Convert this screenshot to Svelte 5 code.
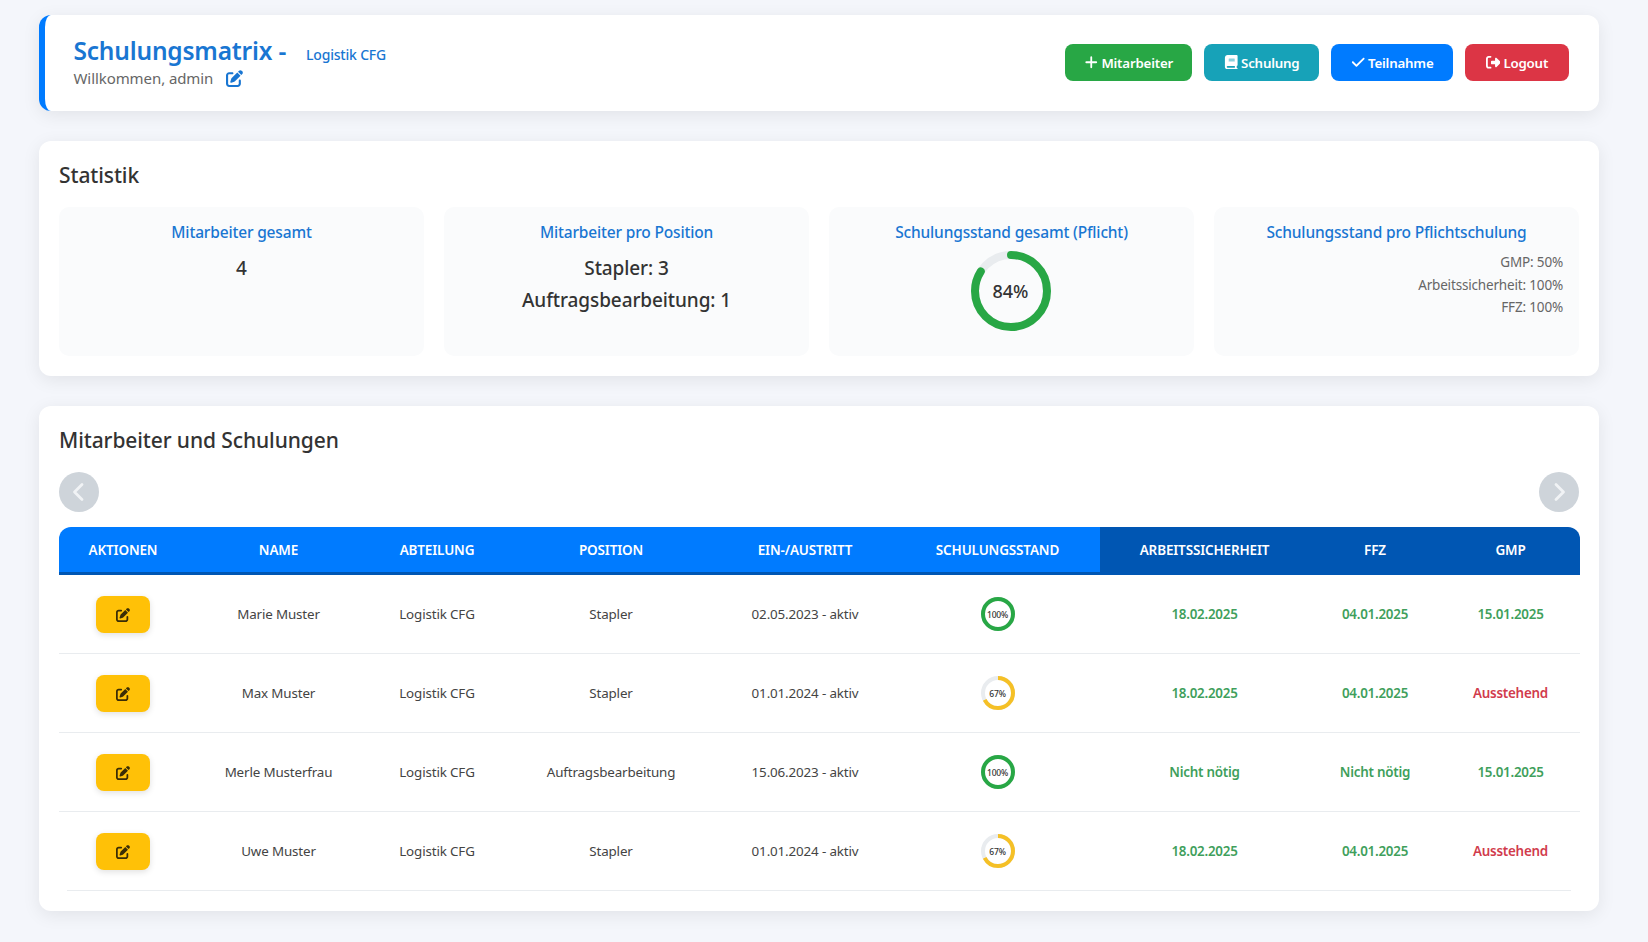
<script>
  const rows = [
    { name: 'Marie Muster', pos: 'Stapler', date: '02.05.2023 - aktiv', pct: 100, a: '18.02.2025', f: '04.01.2025', g: '15.01.2025' },
    { name: 'Max Muster', pos: 'Stapler', date: '01.01.2024 - aktiv', pct: 67, a: '18.02.2025', f: '04.01.2025', g: 'Ausstehend' },
    { name: 'Merle Musterfrau', pos: 'Auftragsbearbeitung', date: '15.06.2023 - aktiv', pct: 100, a: 'Nicht nötig', f: 'Nicht nötig', g: '15.01.2025' },
    { name: 'Uwe Muster', pos: 'Stapler', date: '01.01.2024 - aktiv', pct: 67, a: '18.02.2025', f: '04.01.2025', g: 'Ausstehend' }
  ];
  const widths = [128, 183, 134, 214, 174, 208, 209, 132, 139];
  const edit = 'M471.6 21.7c-21.9-21.9-57.3-21.9-79.2 0L362.3 51.7l97.9 97.9 30.1-30.1c21.9-21.9 21.9-57.3 0-79.2L471.6 21.7zm-299.2 220c-6.1 6.1-10.8 13.6-13.5 21.9l-29.6 88.8c-2.9 8.6-.6 18.1 5.8 24.6s15.9 8.7 24.6 5.8l88.8-29.6c8.2-2.7 15.7-7.4 21.9-13.5L437.7 172.3 339.7 74.3 172.4 241.7zM96 64C43 64 0 107 0 160V416c0 53 43 96 96 96H352c53 0 96-43 96-96V320c0-17.7-14.3-32-32-32s-32 14.3-32 32v96c0 17.7-14.3 32-32 32H96c-17.7 0-32-14.3-32-32V160c0-17.7 14.3-32 32-32h96c17.7 0 32-14.3 32-32s-14.3-32-32-32H96z';
  const circ = 2 * Math.PI * 15;
</script>

<div class="page">
  <header class="card head">
    <div>
      <div class="title-line"><h1>Schulungsmatrix -</h1><span class="dept">Logistik CFG</span></div>
      <div class="welcome">Willkommen, admin <svg class="welcome-icon" viewBox="0 0 512 512"><path d={edit} /></svg></div>
    </div>
    <div class="actions">
      <button class="btn green"><svg viewBox="0 0 448 512"><path d="M256 80c0-17.7-14.3-32-32-32s-32 14.3-32 32V224H48c-17.7 0-32 14.3-32 32s14.3 32 32 32H192V432c0 17.7 14.3 32 32 32s32-14.3 32-32V288H400c17.7 0 32-14.3 32-32s-14.3-32-32-32H256V80z" /></svg><span>Mitarbeiter</span></button>
      <button class="btn teal"><svg viewBox="0 0 448 512"><path d="M96 0C43 0 0 43 0 96V416c0 53 43 96 96 96H384h32c17.7 0 32-14.3 32-32s-14.3-32-32-32V384c17.7 0 32-14.3 32-32V32c0-17.7-14.3-32-32-32H384 96zm0 384H352v64H96c-17.7 0-32-14.3-32-32s14.3-32 32-32zm32-240c0-8.8 7.2-16 16-16H336c8.8 0 16 7.2 16 16s-7.2 16-16 16H144c-8.8 0-16-7.2-16-16zm16 48H336c8.8 0 16 7.2 16 16s-7.2 16-16 16H144c-8.8 0-16-7.2-16-16s7.2-16 16-16z" /></svg><span>Schulung</span></button>
      <button class="btn blue"><svg viewBox="0 0 448 512"><path d="M438.6 105.4c12.5 12.5 12.5 32.8 0 45.3l-256 256c-12.5 12.5-32.8 12.5-45.3 0l-128-128c-12.5-12.5-12.5-32.8 0-45.3s32.8-12.5 45.3 0L160 338.7 393.4 105.4c12.5-12.5 32.8-12.5 45.3 0z" /></svg><span>Teilnahme</span></button>
      <button class="btn red"><svg viewBox="0 0 512 512"><path d="M502.6 278.6c12.5-12.5 12.5-32.8 0-45.3l-128-128c-9.2-9.2-22.9-11.9-34.9-6.9s-19.8 16.6-19.8 29.6l0 72-112 0c-17.7 0-32 14.3-32 32l0 64c0 17.7 14.3 32 32 32l112 0 0 72c0 12.9 7.8 24.6 19.8 29.6s25.7 2.2 34.9-6.9l128-128zM160 96c17.7 0 32-14.3 32-32s-14.3-32-32-32L96 32C43 32 0 75 0 128L0 384c0 53 43 96 96 96l64 0c17.7 0 32-14.3 32-32s-14.3-32-32-32l-64 0c-17.7 0-32-14.3-32-32l0-256c0-17.7 14.3-32 32-32l64 0z" /></svg><span>Logout</span></button>
    </div>
  </header>

  <section class="card panel">
    <h2>Statistik</h2>
    <div class="stats">
      <div class="stat">
        <h3>Mitarbeiter gesamt</h3>
        <div class="val">4</div>
      </div>
      <div class="stat">
        <h3>Mitarbeiter pro Position</h3>
        <div class="val">Stapler: 3</div>
        <div class="val">Auftragsbearbeitung: 1</div>
      </div>
      <div class="stat">
        <h3>Schulungsstand gesamt (Pflicht)</h3>
        <div class="big-ring">
          <svg viewBox="0 0 80 80">
            <circle cx="40" cy="40" r="36" class="track" stroke-width="8" />
            <circle cx="40" cy="40" r="36" class="arc-green" stroke-width="8" stroke-linecap="round"
              stroke-dasharray="{2 * Math.PI * 36 * 0.84} {2 * Math.PI * 36}" transform="rotate(-90 40 40)" />
          </svg>
          <span>84%</span>
        </div>
      </div>
      <div class="stat">
        <h3>Schulungsstand pro Pflichtschulung</h3>
        <div class="list">
          <div>GMP: 50%</div>
          <div>Arbeitssicherheit: 100%</div>
          <div>FFZ: 100%</div>
        </div>
      </div>
    </div>
  </section>

  <section class="card panel last">
    <h2>Mitarbeiter und Schulungen</h2>
    <div class="nav">
      <button class="round" aria-label="Zurück"><svg viewBox="0 0 20 20"><path d="M13 2.5 L5.5 10 L13 17.5" /></svg></button>
      <button class="round" aria-label="Weiter"><svg viewBox="0 0 20 20"><path d="M7 2.5 L14.5 10 L7 17.5" /></svg></button>
    </div>
    <table>
      <colgroup>
        {#each widths as w}<col style="width:{w}px" />{/each}
      </colgroup>
      <thead>
        <tr>
          <th>Aktionen</th><th>Name</th><th>Abteilung</th><th>Position</th><th>Ein-/Austritt</th><th class="shift">Schulungsstand</th>
          <th class="dark">Arbeitssicherheit</th><th class="dark">FFZ</th><th class="dark">GMP</th>
        </tr>
      </thead>
      <tbody>
        {#each rows as r}
          <tr>
            <td><button class="edit" aria-label="Bearbeiten"><svg viewBox="0 0 512 512"><path d={edit} /></svg></button></td>
            <td>{r.name}</td>
            <td>Logistik CFG</td>
            <td>{r.pos}</td>
            <td>{r.date}</td>
            <td class="shift">
              <div class="mini">
                <svg viewBox="0 0 34 34">
                  <circle cx="17" cy="17" r="15" class="track" stroke-width="4" />
                  <circle cx="17" cy="17" r="15" class={r.pct === 100 ? 'arc-green' : 'arc-yellow'} stroke-width="4"
                    stroke-dasharray="{circ * r.pct / 100} {circ}" transform="rotate(-90 17 17)" />
                </svg>
                <span>{r.pct}%</span>
              </div>
            </td>
            <td class="st" class:bad={r.a === 'Ausstehend'}>{r.a}</td>
            <td class="st" class:bad={r.f === 'Ausstehend'}>{r.f}</td>
            <td class="st" class:bad={r.g === 'Ausstehend'}>{r.g}</td>
          </tr>
        {/each}
      </tbody>
    </table>
    <div class="endline"></div>
  </section>
</div>

<style>
  :global(body) {
    margin: 0;
    background: #f4f6fb;
    font-family: "Noto Sans", "Open Sans", sans-serif;
    color: #333;
  }
  .page {
    padding: 15px 49px 31px 39px;
    display: flex;
    flex-direction: column;
    gap: 30px;
  }
  .card {
    background: #fff;
    border-radius: 12px;
    box-shadow: 0 4px 18px rgba(0, 0, 0, 0.08);
  }
  .head {
    height: 96px;
    box-sizing: border-box;
    border-left: 6px solid #007bff;
    padding: 0 30px 2px 28.5px;
    display: flex;
    align-items: center;
    justify-content: space-between;
  }
  .title-line {
    display: flex;
    align-items: center;
    gap: 20px;
    margin-bottom: 2px;
  }
  h1 {
    margin: 0;
    font-size: 24.5px;
    line-height: 30px;
    font-weight: 600;
    color: #1976d2;
    letter-spacing: -0.2px;
  }
  .dept {
    font-size: 14px;
    font-weight: 500;
    color: #1976d2;
    letter-spacing: -0.2px;
    margin-top: 7px;
  }
  .welcome {
    display: flex;
    align-items: center;
    font-size: 15px;
    line-height: 20px;
    color: #666;
    letter-spacing: -0.08px;
  }
  .welcome-icon {
    width: 17px;
    height: 17px;
    margin-left: 13px;
    fill: #1976d2;
  }
  .actions {
    display: flex;
    gap: 12px;
  }
  .btn {
    height: 37px;
    border: 0;
    border-radius: 8px;
    padding: 0;
    display: flex;
    align-items: center;
    justify-content: center;
    gap: 3px;
    color: #fff;
    font: 600 13.3px "Noto Sans", sans-serif;
    letter-spacing: -0.2px;
  }
  .btn span {
    padding-top: 2px;
  }
  .btn svg {
    height: 14.5px;
    width: 14.5px;
    fill: #fff;
  }
  .green { width: 127px; background: #28a745; }
  .teal { width: 115px; background: #17a2b8; }
  .blue { width: 122px; background: #007bff; }
  .red { width: 104px; background: #dc3545; }
  .panel {
    padding: 20px;
  }
  h2 {
    margin: 0;
    font-size: 21px;
    line-height: 28px;
    font-weight: 500;
    color: #333;
    letter-spacing: -0.1px;
  }
  .stats {
    margin-top: 18px;
    display: grid;
    grid-template-columns: repeat(4, 1fr);
    gap: 20px;
  }
  .stat {
    height: 149px;
    box-sizing: border-box;
    padding: 15px 16px;
    background: #fafbfc;
    border-radius: 10px;
    text-align: center;
  }
  h3 {
    margin: 0 0 10px;
    font-size: 15.5px;
    line-height: 20px;
    font-weight: 500;
    color: #1976d2;
    letter-spacing: -0.17px;
  }
  .val {
    font-size: 19px;
    line-height: 32px;
    font-weight: 500;
    color: #333;
    letter-spacing: -0.1px;
  }
  .big-ring {
    position: relative;
    width: 80px;
    height: 80px;
    margin: -1px auto 0;
    left: -1px;
    display: flex;
    align-items: center;
    justify-content: center;
    font-size: 18px;
    font-weight: 500;
  }
  .big-ring svg, .mini svg {
    position: absolute;
    inset: 0;
    width: 100%;
    height: 100%;
  }
  .big-ring span, .mini span {
    position: relative;
  }
  circle {
    fill: none;
  }
  .track { stroke: #e9ecef; }
  .arc-green { stroke: #28a745; }
  .arc-yellow { stroke: #f5c026; }
  .list {
    text-align: right;
    font-size: 13.5px;
    line-height: 22.5px;
    color: #666;
    margin-top: -1px;
    letter-spacing: -0.17px;
  }
  .last {
    padding-bottom: 20px;
  }
  .nav {
    margin-top: 18px;
    display: flex;
    justify-content: space-between;
  }
  .round {
    width: 40px;
    height: 40px;
    padding: 0;
    border: 0;
    border-radius: 50%;
    background: #ced4da;
    display: flex;
    align-items: center;
    justify-content: center;
  }
  .round svg {
    width: 20px;
    height: 20px;
    fill: none;
    stroke: #f1f3f5;
    stroke-width: 2.8;
    stroke-linecap: round;
    stroke-linejoin: round;
  }
  table {
    margin-top: 15px;
    width: 100%;
    table-layout: fixed;
    border-collapse: separate;
    border-spacing: 0;
  }
  th {
    height: 45px;
    padding: 0;
    background: #007bff;
    border-bottom: 3px solid #0056b3;
    color: #fff;
    font-size: 13.5px;
    font-weight: 600;
    text-transform: uppercase;
    text-align: center;
    letter-spacing: -0.15px;
  }
  th:first-child { border-top-left-radius: 12px; }
  th:last-child { border-top-right-radius: 12px; }
  th.dark { background: #0056b3; }
  .shift { padding-left: 3px; }
  td {
    height: 78px;
    padding: 0;
    text-align: center;
    font-size: 13.4px;
    color: #444;
    border-bottom: 1px solid #e9ecef;
    letter-spacing: -0.15px;
  }
  tbody tr:last-child td { border-bottom: 0; }
  .st {
    color: #3f9f5c;
    font-weight: 600;
    letter-spacing: -0.25px;
  }
  .st.bad { color: #d13b4c; }
  .edit {
    width: 54px;
    height: 37px;
    padding: 0;
    border: 0;
    border-radius: 8px;
    background: #ffc107;
    box-shadow: 0 2px 6px rgba(0, 0, 0, 0.12);
    display: inline-flex;
    align-items: center;
    justify-content: center;
    vertical-align: middle;
  }
  .edit svg {
    width: 14px;
    height: 14px;
    margin-top: 2px;
    fill: #3a2d06;
  }
  .mini {
    position: relative;
    width: 34px;
    height: 34px;
    margin: 0 auto;
    display: flex;
    align-items: center;
    justify-content: center;
    font-size: 8.5px;
    font-weight: 500;
    color: #333;
    letter-spacing: -0.2px;
  }
  .endline {
    margin: 0 8px;
    border-top: 1px solid #e9ecef;
  }
</style>
